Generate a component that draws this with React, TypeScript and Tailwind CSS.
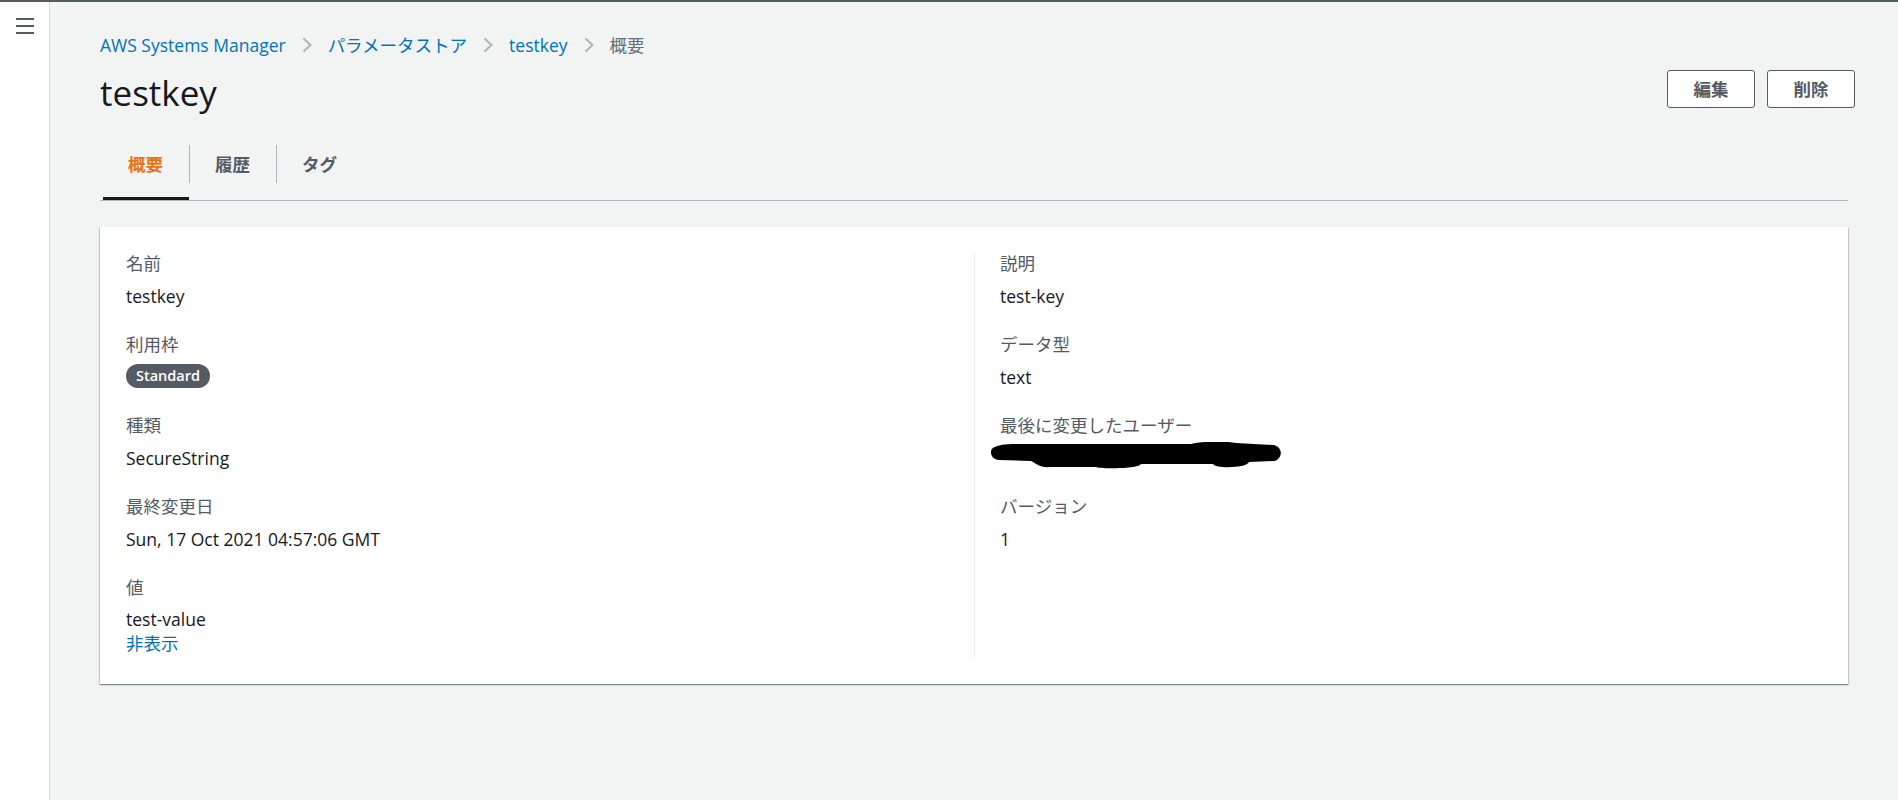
import React from "react";

const font = { fontFamily: '"Open Sans", "Noto Sans CJK JP", sans-serif' };

const Chevron = () => (
  <svg width="10" height="16" viewBox="0 0 10 16" className="mx-[16px] shrink-0">
    <path d="M1.5 1.5 L8.5 8 L1.5 14.5" fill="none" stroke="#aab7b8" strokeWidth="2" />
  </svg>
);

const Scribble = () => (
  <svg width="292" height="27" viewBox="0 0 292 27" className="ml-[-9px]">
    <path
      d="M4 5 C10 2 20 2 30 2 L200 2 C212 -1 235 -1 245 1 L282 3 C291 4 293 15 284 19 L258 20 C256 26 225 27 222 22 L150 22 C148 27 108 27 105 25 L60 25 C48 26 45 21 40 19 L8 18 C-2 17 -2 6 4 5 Z"
      fill="#000"
    />
  </svg>
);

type Item = { label: string; value: React.ReactNode; last?: boolean };

const Field = ({ label, value, last }: Item) => (
  <div className={last ? "" : "mb-[26px]"}>
    <div className="leading-[22px] text-[#545b64]">{label}</div>
    <div className="mt-[11px] leading-[22px] text-[#16191f]">{value}</div>
  </div>
);

export default function App() {
  const tabs = ["概要", "履歴", "タグ"];

  return (
    <div style={font} className="h-[800px] flex flex-col text-[17.5px] overflow-hidden">
      <div className="h-[2px] bg-[#545b64]" />
      <div className="flex flex-1">
        <aside className="w-[50px] shrink-0 bg-white border-r border-[#d5dbdb]">
          <svg width="18" height="16" viewBox="0 0 18 16" className="ml-[16px] mt-[16px]">
            <rect x="0" y="0" width="18" height="2" fill="#545b64" />
            <rect x="0" y="7" width="18" height="2" fill="#545b64" />
            <rect x="0" y="14" width="18" height="2" fill="#545b64" />
          </svg>
        </aside>

        <main className="flex-1 bg-[#f2f3f3] px-[50px] pt-[32px]">
          <nav className="flex items-center h-[22px] leading-[22px]">
            <span className="text-[#0073bb]">AWS Systems Manager</span>
            <Chevron />
            <span className="text-[#0073bb]">パラメータストア</span>
            <Chevron />
            <span className="text-[#0073bb]">testkey</span>
            <Chevron />
            <span className="text-[#687078]">概要</span>
          </nav>

          <div className="mt-[14px] mr-[-7px] flex items-start justify-between">
            <h1 className="mt-[3px] text-[35px] leading-[40px] text-[#16191f]">testkey</h1>
            <div className="flex gap-[12px]">
              <button className="w-[88px] h-[38px] rounded-[3px] border border-[#545b64] bg-white font-bold text-[#545b64]">
                編集
              </button>
              <button className="w-[88px] h-[38px] rounded-[3px] border border-[#545b64] bg-white font-bold text-[#545b64]">
                削除
              </button>
            </div>
          </div>

          <div className="mt-[18px] pl-[3px] flex items-start border-b border-[#aab7b8]">
            {tabs.map((t, i) => (
              <React.Fragment key={t}>
                {i > 0 && <div className="w-px h-[38px] mt-[14px] bg-[#aab7b8]" />}
                <div className="flex flex-col">
                  <div
                    className={`h-[66px] flex items-center pl-[25px] pr-[26px] font-bold ${
                      i === 0 ? "text-[#ec7211]" : "text-[#545b64]"
                    }`}
                  >
                    {t}
                  </div>
                  <div className={`h-[3px] ${i === 0 ? "bg-[#16191f]" : ""}`} />
                </div>
              </React.Fragment>
            ))}
          </div>

          <section className="mt-[26px] bg-white shadow-[0_1px_1px_0_rgba(0,28,36,0.3),1px_1px_1px_0_rgba(0,28,36,0.15),-1px_1px_1px_0_rgba(0,28,36,0.15)]">
            <div className="grid grid-cols-2 pt-[25px] pb-[26px]">
              <div className="pl-[26px] pb-[3px]">
                <Field label="名前" value="testkey" />
                <div className="mb-[26px]">
                  <div className="leading-[22px] text-[#545b64]">利用枠</div>
                  <div className="mt-[9px] flex">
                    <span className="h-[24px] px-[10px] rounded-full bg-[#545b64] text-white text-[14.5px] font-semibold leading-[24px]">
                      Standard
                    </span>
                  </div>
                </div>
                <Field label="種類" value="SecureString" />
                <Field label="最終変更日" value="Sun, 17 Oct 2021 04:57:06 GMT" />
                <div>
                  <div className="leading-[22px] text-[#545b64]">値</div>
                  <div className="mt-[9px] leading-[24px] text-[#16191f]">test-value</div>
                  <div className="leading-[24px] text-[#0073bb]">非表示</div>
                </div>
              </div>

              <div className="border-l border-[#eaeded] pl-[25px]">
                <Field label="説明" value="test-key" />
                <Field label="データ型" value="text" />
                <div className="mb-[26px]">
                  <div className="leading-[22px] text-[#545b64]">最後に変更したユーザー</div>
                  <div className="mt-[6px] h-[27px] flex items-start">
                    <Scribble />
                  </div>
                </div>
                <Field label="バージョン" value="1" last />
              </div>
            </div>
          </section>
        </main>
      </div>
    </div>
  );
}
